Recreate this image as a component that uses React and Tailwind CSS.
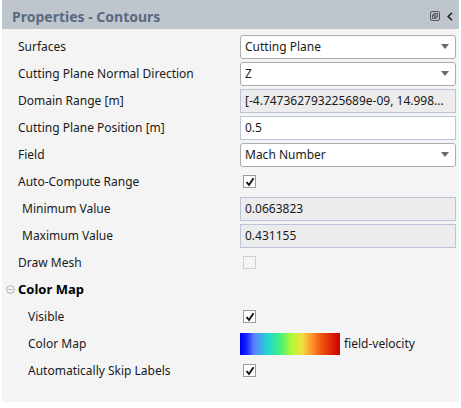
import React from 'react';

const font = { fontFamily: '"Noto Sans", "Open Sans", Arial, sans-serif' };

const Arrow = () => (
  <svg width="8" height="5" viewBox="0 0 8 5" className="mr-[6px]">
    <path d="M0 0 L8 0 L4 5 Z" fill="#6b6b6b" />
  </svg>
);

const Check = ({ checked, disabled }) => (
  <div
    className={`w-[13px] h-[13px] border flex items-center justify-center ml-[3px] ${
      disabled ? 'border-[#cfcfcf] bg-[#f4f4f4]' : 'border-[#9a9a9a] bg-white'
    }`}
  >
    {checked && (
      <svg width="10" height="10" viewBox="0 0 10 10">
        <path d="M1.5 5 L4 8 L8.5 1.2" fill="none" stroke="#111" strokeWidth="1.9" />
      </svg>
    )}
  </div>
);

const Select = ({ value }) => (
  <div className="h-[24px] w-full bg-white border border-[#acacac] rounded-[3px] flex items-center justify-between pl-[4px]">
    <span className="text-[12px] text-[#1a1a1a]">{value}</span>
    <Arrow />
  </div>
);

const Field = ({ value, readOnly }) => (
  <div
    className={`h-[24px] w-full border border-[#b9c5d6] flex items-center pl-[4px] overflow-hidden whitespace-nowrap ${
      readOnly ? 'bg-[#ececec]' : 'bg-white'
    }`}
  >
    <span className="text-[12px] text-[#1a1a1a]">{value}</span>
  </div>
);

const Row = ({ label, indent = 'pl-4', children }) => (
  <div className="h-[27px] flex items-center">
    <div className={`w-[238px] shrink-0 text-[12px] text-[#1a1a1a] ${indent}`}>{label}</div>
    <div className="w-[216px] flex items-center">{children}</div>
  </div>
);

export default function App() {
  return (
    <div className="w-[461px] h-[408px] bg-white" style={font}>
      <div className="ml-[2px] w-[457px] h-[402px] bg-[#f4f4f4] flex flex-col">
        <div className="h-[29px] bg-[#bfc5cc] flex items-center justify-between pl-[10px] pr-[6px] pt-[3px]">
          <span className="text-[14px] font-bold text-[#5a6a80]">Properties - Contours</span>
          <div className="flex items-center gap-[7px]">
            <svg width="10" height="10" viewBox="0 0 10 10">
              <rect x="0.5" y="0.5" width="9" height="9" rx="1.5" fill="none" stroke="#555" strokeWidth="1" />
              <rect x="2.5" y="4" width="3.5" height="3.5" fill="none" stroke="#555" strokeWidth="0.9" />
              <rect x="4" y="2.5" width="3.5" height="3.5" fill="none" stroke="#555" strokeWidth="0.9" />
            </svg>
            <svg width="6" height="9" viewBox="0 0 6 9">
              <path d="M5 0.8 L1.2 4.5 L5 8.2" fill="none" stroke="#222" strokeWidth="1.6" />
            </svg>
          </div>
        </div>
        <div className="pt-[4px]">
          <Row label="Surfaces"><Select value="Cutting Plane" /></Row>
          <Row label="Cutting Plane Normal Direction"><Select value="Z" /></Row>
          <Row label="Domain Range [m]"><Field readOnly value="[-4.747362793225689e-09, 14.998..." /></Row>
          <Row label="Cutting Plane Position [m]"><Field value="0.5" /></Row>
          <Row label="Field"><Select value="Mach Number" /></Row>
          <Row label="Auto-Compute Range"><Check checked /></Row>
          <Row label="Minimum Value" indent="pl-5"><Field readOnly value="0.0663823" /></Row>
          <Row label="Maximum Value" indent="pl-5"><Field readOnly value="0.431155" /></Row>
          <Row label="Draw Mesh"><Check disabled /></Row>
          <div className="h-[27px] flex items-center pl-[4px]">
            <svg width="9" height="9" viewBox="0 0 9 9" className="mr-[3px]">
              <circle cx="4.5" cy="4.5" r="3.8" fill="none" stroke="#a8a8a8" strokeWidth="0.9" />
              <path d="M2.6 4.5 H6.4" stroke="#a8a8a8" strokeWidth="0.9" />
            </svg>
            <span className="text-[13px] font-bold text-black">Color Map</span>
          </div>
          <Row label="Visible" indent="pl-[26px]"><Check checked /></Row>
          <Row label="Color Map" indent="pl-[26px]">
            <div className="flex items-center">
              <div className="w-[100px] h-[22px] bg-[linear-gradient(to_right,#0000f0_0%,#1020ff_6%,#5a80ff_14%,#20d8d0_28%,#40f080_40%,#b8f830_52%,#f0e040_62%,#ffa030_70%,#f05010_82%,#c80000_100%)]" />
              <span className="ml-[4px] text-[12px] text-[#1a1a1a]">field-velocity</span>
            </div>
          </Row>
          <Row label="Automatically Skip Labels" indent="pl-[26px]"><Check checked /></Row>
        </div>
      </div>
    </div>
  );
}
